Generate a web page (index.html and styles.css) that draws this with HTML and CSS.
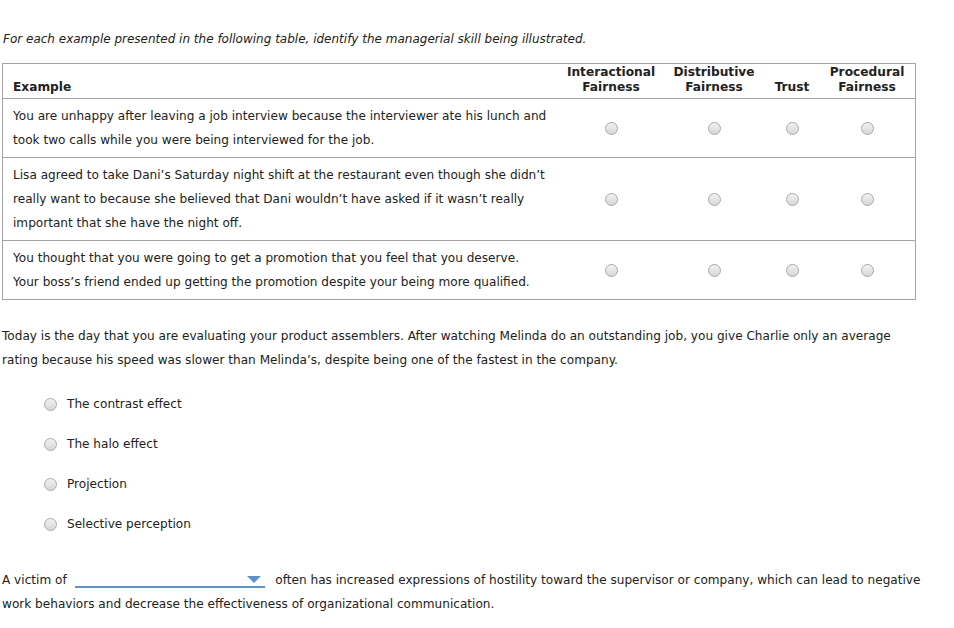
FILE: index.html
```html
<!DOCTYPE html>
<html>
<head>
<meta charset="utf-8">
<link rel="stylesheet" href="styles.css">
</head>
<body>
<p class="intro">For each example presented in the following table, identify the managerial skill being illustrated.</p>
<table class="grid">
  <thead>
    <tr>
      <th class="ex">Example</th>
      <th class="c1">Interactional<br>Fairness</th>
      <th class="c2">Distributive<br>Fairness</th>
      <th class="c3">Trust</th>
      <th class="c4">Procedural<br>Fairness</th>
    </tr>
  </thead>
  <tbody>
    <tr>
      <td class="ex">You are unhappy after leaving a job interview because the interviewer ate his lunch and took two calls while you were being interviewed for the job.</td>
      <td class="rc"><span class="radio"></span></td>
      <td class="rc"><span class="radio"></span></td>
      <td class="rc"><span class="radio"></span></td>
      <td class="rc"><span class="radio"></span></td>
    </tr>
    <tr>
      <td class="ex">Lisa agreed to take Dani’s Saturday night shift at the restaurant even though she didn’t really want to because she believed that Dani wouldn’t have asked if it wasn’t really important that she have the night off.</td>
      <td class="rc"><span class="radio"></span></td>
      <td class="rc"><span class="radio"></span></td>
      <td class="rc"><span class="radio"></span></td>
      <td class="rc"><span class="radio"></span></td>
    </tr>
    <tr>
      <td class="ex">You thought that you were going to get a promotion that you feel that you deserve.<br>Your boss’s friend ended up getting the promotion despite your being more qualified.</td>
      <td class="rc"><span class="radio"></span></td>
      <td class="rc"><span class="radio"></span></td>
      <td class="rc"><span class="radio"></span></td>
      <td class="rc"><span class="radio"></span></td>
    </tr>
  </tbody>
</table>

<p class="question">Today is the day that you are evaluating your product assemblers. After watching Melinda do an outstanding job, you give Charlie only an average rating because his speed was slower than Melinda’s, despite being one of the fastest in the company.</p>

<ul class="options">
  <li><span class="radio"></span><span class="label">The contrast effect</span></li>
  <li><span class="radio"></span><span class="label">The halo effect</span></li>
  <li><span class="radio"></span><span class="label">Projection</span></li>
  <li><span class="radio"></span><span class="label">Selective perception</span></li>
</ul>

<p class="fill">A victim of <span class="select"><span class="arrow"></span></span> often has increased expressions of hostility toward the supervisor or company, which can lead to negative work behaviors and decrease the effectiveness of organizational communication.</p>
</body>
</html>
```

FILE: styles.css
```css
html, body {
  background: #ffffff;
}
body {
  margin: 0;
  padding: 0 2px;
  width: 928px;
  font-family: "DejaVu Sans", Verdana, sans-serif;
  font-size: 12.1px;
  color: #222222;
}
.intro {
  margin: 30px 0 0 1px;
  font-style: italic;
  font-size: 12px;
  line-height: 18px;
}
.grid {
  margin-top: 15px;
  width: 914px;
  table-layout: fixed;
  border-collapse: collapse;
  border: 1px solid #a3a3a3;
}
.grid th {
  font-weight: bold;
  font-size: 12.2px;
  line-height: 15px;
  vertical-align: bottom;
  padding: 1px 0 3px;
  text-align: center;
}
.grid th.ex {
  text-align: left;
  padding-left: 10px;
}
.grid td {
  border-top: 1px solid #a3a3a3;
}
.grid td.ex {
  padding: 5px 0 5px 10px;
  line-height: 24px;
}
.grid .c1 { width: 104px; }
.grid .c2 { width: 102px; }
.grid .c3 { width: 54px; }
.grid .c4 { width: 96px; }
.rc {
  text-align: center;
  vertical-align: middle;
}
.radio {
  display: inline-block;
  width: 11px;
  height: 11px;
  border: 1px solid #a9a9a9;
  border-radius: 50%;
  background: linear-gradient(#f2f2f2, #d6d6d6);
  vertical-align: middle;
}
.question {
  margin: 24px 0 0 0;
  line-height: 24px;
}
.options {
  list-style: none;
  margin: 23px 0 0 0;
  padding: 0 0 0 42px;
}
.options li {
  height: 40px;
  display: flex;
  align-items: flex-start;
}
.options .radio {
  margin-top: 3px;
  margin-right: 10px;
}
.options .label {
  line-height: 18px;
}
.fill {
  margin: 13px 0 0 0;
  line-height: 24px;
}
.select {
  display: inline-block;
  position: relative;
  width: 190px;
  height: 14px;
  border-bottom: 2px solid #5d93c7;
  vertical-align: -4px;
  margin: 0 7px 0 4px;
}
.arrow {
  position: absolute;
  right: 4px;
  top: 4px;
  width: 0;
  height: 0;
  border-left: 7px solid transparent;
  border-right: 7px solid transparent;
  border-top: 7px solid #5d93c7;
}
```
